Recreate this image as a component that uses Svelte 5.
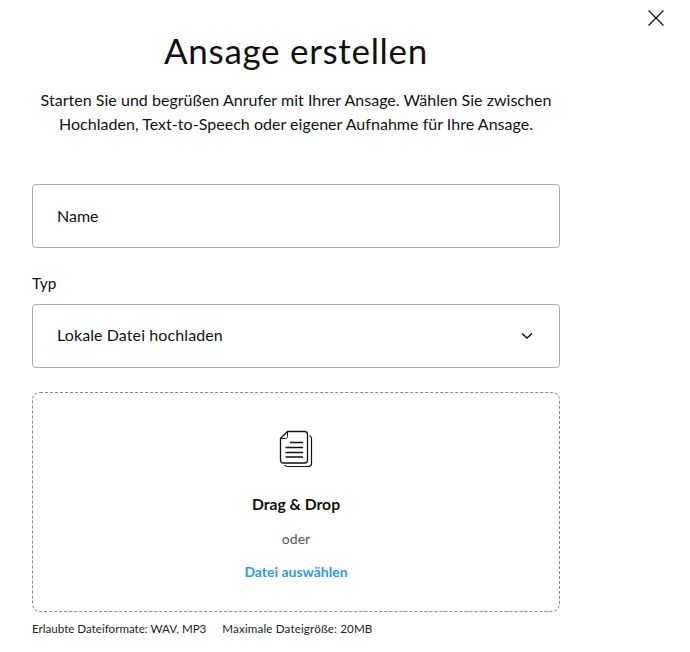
<script>
	let name = $state('');
</script>

<div class="dialog">
	<button class="close" aria-label="Schließen">
		<svg width="16" height="16" viewBox="0 0 16 16"><path d="M0.5 0.5L15.5 15.5M15.5 0.5L0.5 15.5" stroke="#111" stroke-width="1.3" fill="none" /></svg>
	</button>

	<div class="content">
		<h1>Ansage erstellen</h1>
		<p class="intro">
			Starten Sie und begrüßen Anrufer mit Ihrer Ansage. Wählen Sie zwischen<br />
			Hochladen, Text-to-Speech oder eigener Aufnahme für Ihre Ansage.
		</p>

		<input class="field" type="text" placeholder="Name" bind:value={name} />

		<div class="label">Typ</div>
		<div class="field select">
			<span>Lokale Datei hochladen</span>
			<svg width="12" height="8" viewBox="0 0 12 8"><path d="M1 1.5L6 6L11 1.5" stroke="#111" stroke-width="1.5" fill="none" /></svg>
		</div>

		<div class="drop">
			<svg class="doc" width="34" height="38" viewBox="0 0 34 38" fill="none" stroke="#111">
				<path d="M30.5 5.5C31.5 6 32.5 7 32.5 8.5V33.5C32.5 35.5 31.5 36.5 29.5 36.5H9C7 36.5 6 36 5.5 35" stroke-width="1.2" />
				<path d="M8.5 1.5H25.5C27.5 1.5 28.5 2.5 28.5 4.5V30C28.5 32 27.5 33 25.5 33H4.5C2.5 33 1.5 32 1.5 30V8.5Z" stroke-width="1.3" />
				<path d="M8.5 1.5V6.5C8.5 7.8 7.8 8.5 6.5 8.5H1.5" stroke-width="1" />
				<path d="M11 12.5H24M6.5 17.5H24M6.5 22.5H24M6.5 27H24" stroke-width="1.3" />
			</svg>
			<div class="drag">Drag &amp; Drop</div>
			<div class="or">oder</div>
			<a class="pick" href="#top">Datei auswählen</a>
		</div>

		<div class="hint">
			<span>Erlaubte Dateiformate: WAV, MP3</span>
			<span class="size">Maximale Dateigröße: 20MB</span>
		</div>
	</div>
</div>

<style>
	:global(body) {
		margin: 0;
		background: #fff;
	}

	.dialog {
		position: relative;
		height: 652px;
		overflow: hidden;
		font-family: Lato, "Open Sans", sans-serif;
		color: #111;
	}

	.close {
		position: absolute;
		top: 10px;
		left: 648px;
		padding: 0;
		border: 0;
		background: none;
		line-height: 0;
	}

	.content {
		width: 528px;
		margin-left: 32px;
		padding-top: 28px;
	}

	h1 {
		margin: 0;
		font-size: 35px;
		font-weight: 400;
		line-height: 44px;
		text-align: center;
		letter-spacing: 0.7px;
	}

	.intro {
		margin: 16px 0 48px;
		font-size: 16px;
		line-height: 24px;
		text-align: center;
		letter-spacing: 0.03px;
	}

	.field {
		display: flex;
		align-items: center;
		justify-content: space-between;
		box-sizing: border-box;
		width: 100%;
		height: 64px;
		padding: 0 26px 0 24px;
		border: 1px solid #aaa;
		border-radius: 4px;
		font-family: inherit;
		font-size: 16px;
		color: #111;
		outline: none;
	}

	input.field {
		padding-bottom: 2px;
	}

	.select span {
		margin-bottom: 3px;
		letter-spacing: 0.1px;
	}

	.field::placeholder {
		color: #111;
		opacity: 1;
	}

	.label {
		margin: 25px 0 11px;
		font-size: 15.5px;
		line-height: 20px;
	}

	.drop {
		display: flex;
		flex-direction: column;
		align-items: center;
		box-sizing: border-box;
		height: 220px;
		margin-top: 24px;
		padding-top: 37px;
		border: 1px dashed #888;
		border-radius: 8px;
	}

	.drag {
		margin-top: 25px;
		font-size: 15.7px;
		font-weight: 700;
		line-height: 22px;
	}

	.or {
		margin-top: 14px;
		font-size: 14px;
		line-height: 20px;
		color: #555;
	}

	.pick {
		margin-top: 13px;
		font-size: 14px;
		font-weight: 700;
		line-height: 20px;
		color: #2a9ae0;
		text-decoration: none;
	}

	.hint {
		display: flex;
		gap: 16px;
		margin-top: 9px;
		font-size: 11.6px;
		line-height: 16px;
		color: #222;
	}

	.size {
		letter-spacing: 0.15px;
	}
</style>
